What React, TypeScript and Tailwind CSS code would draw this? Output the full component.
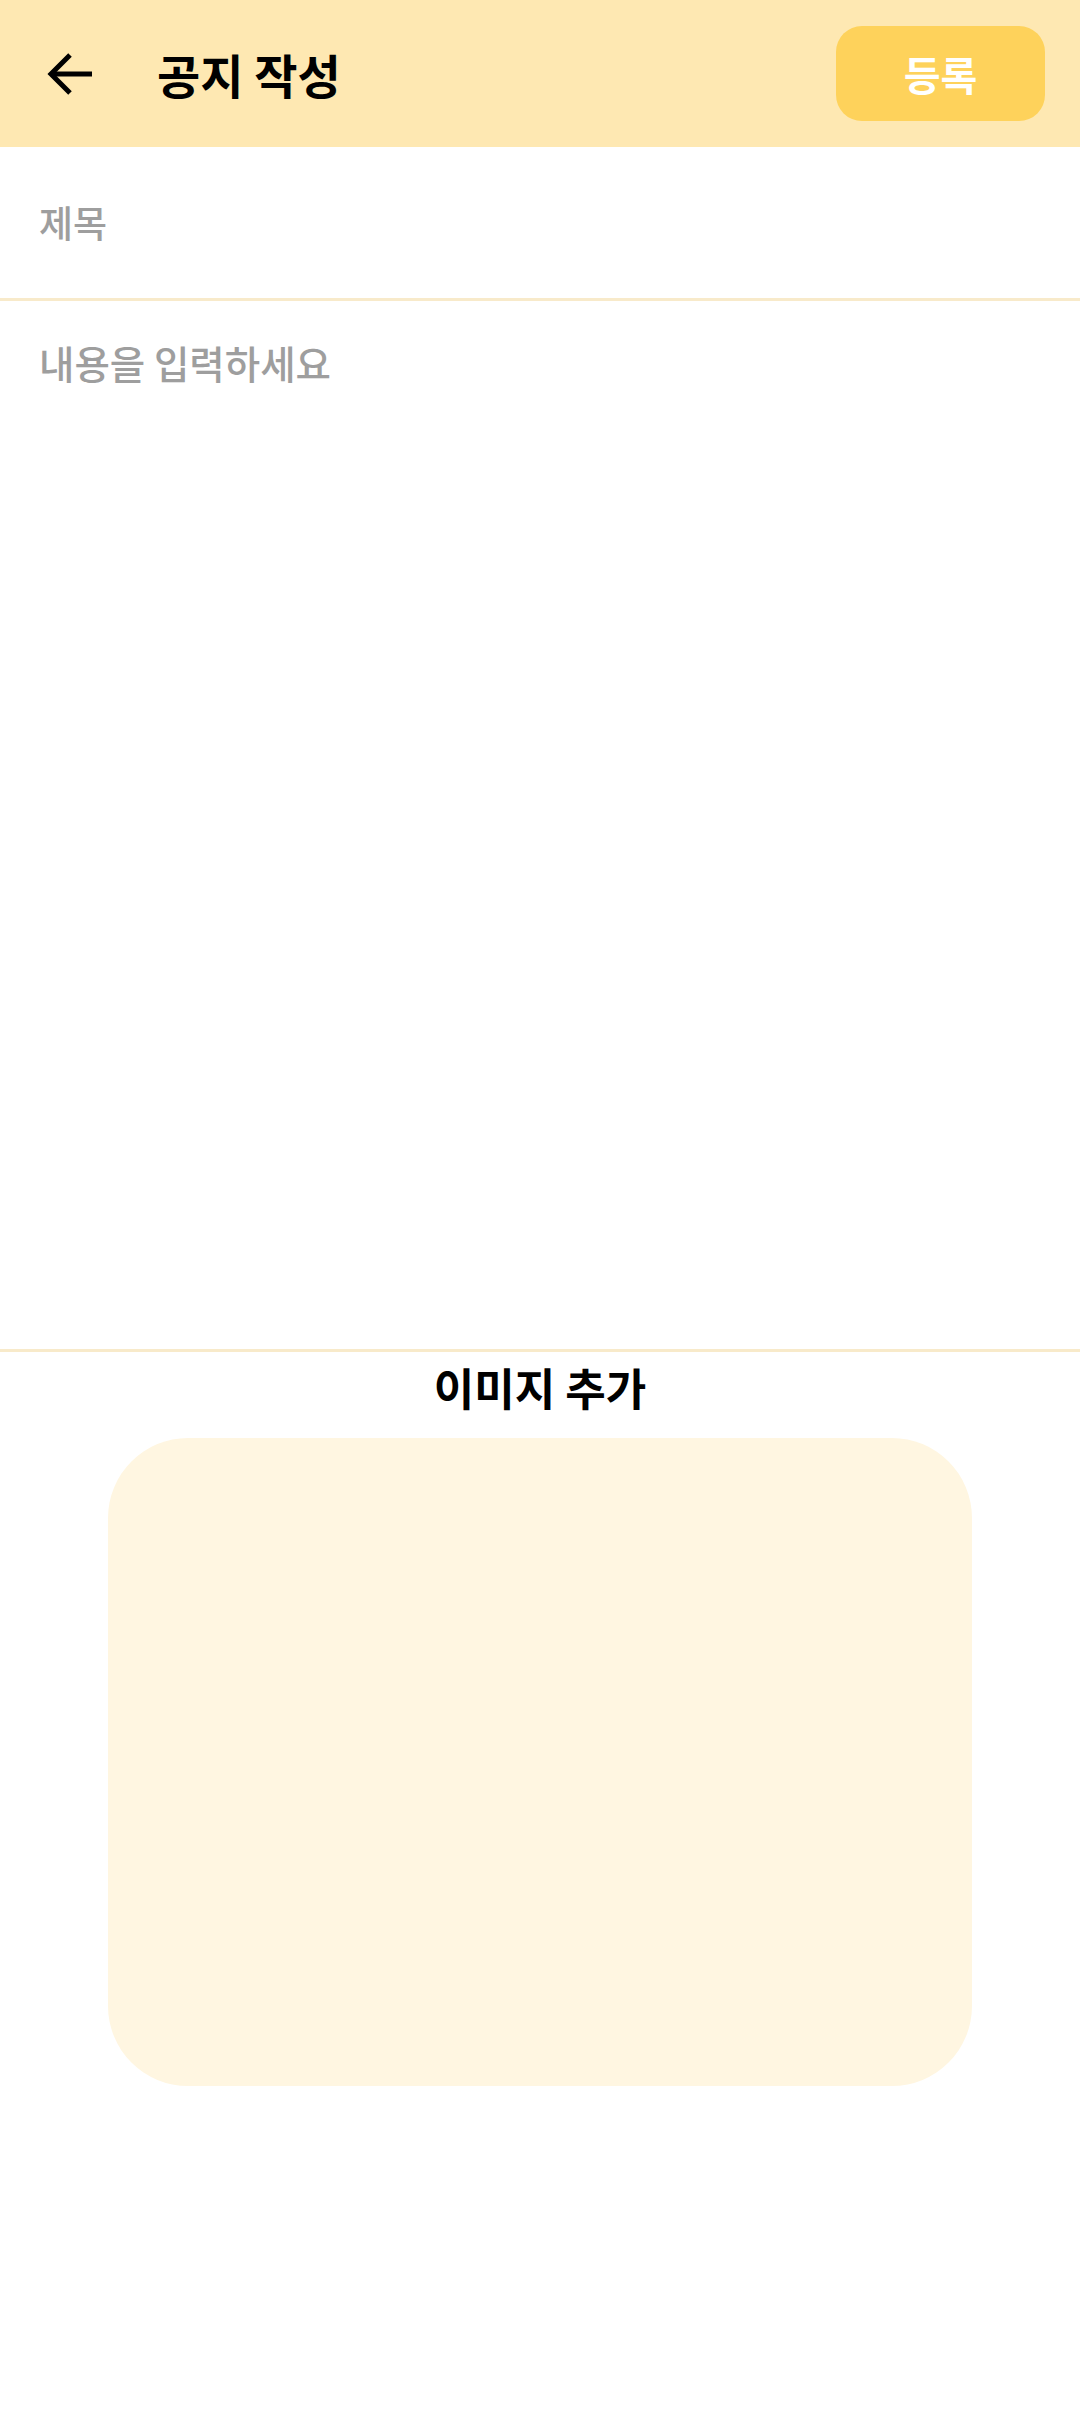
import { useState } from "react";

const font = { fontFamily: '"Noto Sans CJK KR", "Noto Sans", sans-serif' };

function BackArrow() {
  return (
    <svg width="46" height="44" viewBox="0 0 46 44" fill="none" aria-hidden>
      <path d="M45 22H5" stroke="#000" strokeWidth="5" />
      <path d="M23 3L4 22l19 19" stroke="#000" strokeWidth="5" strokeLinejoin="miter" />
    </svg>
  );
}

export default function App() {
  const [title, setTitle] = useState("");
  const [body, setBody] = useState("");

  return (
    <div className="flex min-h-[2421px] w-[1080px] flex-col bg-white" style={font}>
      {/* Header */}
      <div className="flex h-[147px] shrink-0 items-center bg-[#FEE8B2]">
        <button className="ml-[47px] flex items-center">
          <BackArrow />
        </button>
        <h1 className="ml-[64px] text-[47px] font-bold leading-none text-black">공지 작성</h1>
        <div className="flex-1" />
        <button className="mr-[35px] flex h-[95px] w-[209px] items-center justify-center rounded-[26px] bg-[#FED25B] text-[40px] font-bold text-white">
          등록
        </button>
      </div>

      {/* Title input */}
      <div className="flex h-[154px] shrink-0 items-center border-b-[3px] border-[#F8EACA] pl-[39px]">
        <input
          value={title}
          onChange={(e) => setTitle(e.target.value)}
          placeholder="제목"
          className="w-full bg-transparent text-[37px] font-medium text-black outline-none placeholder:text-[#9E9E9E]"
        />
      </div>

      {/* Body */}
      <div className="h-[1051px] shrink-0 border-b-[3px] border-[#F8EACA] px-[39px] pt-[35px]">
        <textarea
          value={body}
          onChange={(e) => setBody(e.target.value)}
          placeholder="내용을 입력하세요"
          className="h-full w-full resize-none bg-transparent text-[38.5px] font-medium leading-[1.4] text-black outline-none placeholder:text-[#9E9E9E]"
        />
      </div>

      {/* Image */}
      <div className="flex flex-col items-center pt-[5px]">
        <div className="text-[44px] font-bold leading-[1.4] text-black">이미지 추가</div>
        <button className="mt-[19px] h-[648px] w-[864px] rounded-[80px] bg-[#FFF6E1]" />
      </div>
    </div>
  );
}
